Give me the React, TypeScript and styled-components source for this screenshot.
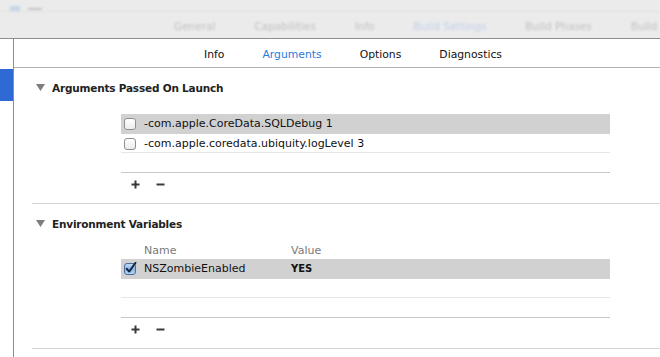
import React from "react";
import styled, { createGlobalStyle } from "styled-components";

const GlobalStyle = createGlobalStyle`
  html, body { margin: 0; padding: 0; background: #ffffff; }
  body { font-family: "DejaVu Sans", "Noto Sans", sans-serif; font-size: 11px; color: #000; }
  * { box-sizing: border-box; }
`;

const Window = styled.div`
  width: 660px;
  height: 357px;
  overflow: hidden;
  display: flex;
  flex-direction: column;
  background: #fff;
`;

const TopBar = styled.div`
  height: 39px;
  flex: none;
  background: #ebebeb;
  border-bottom: 1px solid #8e8e8e;
  display: flex;
  flex-direction: column;
`;

const TitleStrip = styled.div`
  height: 12px;
  border-bottom: 1px solid #e2e2e2;
  display: flex;
  align-items: flex-end;
  gap: 8px;
  padding-left: 10px;
  filter: blur(0.8px);
  overflow: hidden;
`;

const TitleIcon = styled.div`
  width: 10px;
  height: 5px;
  background: #c9d6ea;
`;

const TitleText = styled.div`
  width: 14px;
  height: 2px;
  background: #c4c4c4;
  margin-bottom: 1px;
`;

const ProjectTabs = styled.div`
  flex: 1;
  display: flex;
  align-items: center;
  padding-left: 174px;
  padding-top: 2px;
  gap: 39px;
  filter: blur(0.9px);
  white-space: nowrap;
  overflow: hidden;
`;

const ProjectTab = styled.span<{ $active?: boolean }>`
  font-size: 10.5px;
  color: ${(p) => (p.$active ? "#c3d0ea" : "#c2c2c2")};
`;

const Body = styled.div`
  flex: 1;
  display: flex;
  min-height: 0;
`;

const Sidebar = styled.div`
  width: 14px;
  flex: none;
  border-right: 1px solid #8e8e8e;
  padding-top: 30px;
`;

const SidebarMarker = styled.div`
  width: 13px;
  height: 32px;
  background: #2f69d3;
`;

const Main = styled.div`
  flex: 1;
  display: flex;
  flex-direction: column;
`;

const TabBar = styled.div`
  height: 29px;
  flex: none;
  border-bottom: 1px solid #b2b2b2;
  display: flex;
  align-items: center;
  padding-left: 190px;
  padding-top: 3px;
  gap: 38px;
`;

const Tab = styled.span<{ $active?: boolean }>`
  font-size: 10.8px;
  color: ${(p) => (p.$active ? "#2b7ae0" : "#111")};
`;

const Section = styled.section`
  margin-left: 18px;
  border-bottom: 1px solid #d4d4d4;
  padding-bottom: 7px;
`;

const SectionHeader = styled.div`
  height: 38px;
  display: flex;
  align-items: center;
  gap: 7px;
  padding-left: 4px;
  padding-top: 1px;
  font-weight: bold;
  font-size: 10.5px;
  letter-spacing: -0.2px;
  color: #222;
`;

const Table = styled.div<{ $top: number }>`
  margin-left: 89px;
  width: 489px;
  margin-top: ${(p) => p.$top}px;
`;

const ColumnHeader = styled.div`
  height: 17px;
  display: grid;
  grid-template-columns: 170px 1fr;
  align-items: center;
  padding-left: 23px;
  color: #7a7a7a;
  font-size: 11px;
`;

const HeaderCell = styled.span<{ $first?: boolean }>`
  margin-left: ${(p) => (p.$first ? "0" : "-23px")};
`;

const Row = styled.div<{ $selected?: boolean; $last?: boolean }>`
  height: ${(p) => (p.$selected || p.$last ? 20 : 19)}px;
  display: grid;
  grid-template-columns: 23px 147px 1fr;
  align-items: center;
  background: ${(p) => (p.$selected ? "#d1d1d1" : "#fff")};
  border-bottom: 1px solid ${(p) => (p.$last ? "#c8c8c8" : p.$selected ? "#d1d1d1" : "#e6e6e6")};
  font-size: 11px;
  color: #111;
  white-space: nowrap;
`;

const CheckCell = styled.div`
  display: flex;
  align-items: center;
  padding-left: 3px;
`;

const Toolbar = styled.div`
  height: 23px;
  margin-left: 89px;
  display: flex;
  align-items: center;
  gap: 16px;
  padding-left: 10px;
`;

const ValueCell = styled.span<{ $bold?: boolean }>`
  font-weight: ${(p) => (p.$bold ? "bold" : "normal")};
  font-size: ${(p) => (p.$bold ? "10px" : "11px")};
`;

const Disclosure = () => (
  <svg width="9" height="7" viewBox="0 0 9 7">
    <path d="M0 0 H9 L4.5 7 Z" fill="#7d7d7d" />
  </svg>
);

const Checkbox = ({ checked }: { checked?: boolean }) =>
  checked ? (
    <svg width="13" height="13" viewBox="0 0 13 13">
      <defs>
        <linearGradient id="cbBlue" x1="0" y1="0" x2="0" y2="1">
          <stop offset="0" stopColor="#c9def5" />
          <stop offset="0.5" stopColor="#8ab6e6" />
          <stop offset="1" stopColor="#b9d6f4" />
        </linearGradient>
      </defs>
      <rect x="0.5" y="1.5" width="11" height="11" rx="2.5" fill="url(#cbBlue)" stroke="#4a6f9e" />
      <path d="M2.8 6.8 L5.2 9.6 L11.5 0.8" fill="none" stroke="#10233d" strokeWidth="1.9" strokeLinecap="round" strokeLinejoin="round" />
    </svg>
  ) : (
    <svg width="13" height="13" viewBox="0 0 13 13">
      <defs>
        <linearGradient id="cbWhite" x1="0" y1="0" x2="0" y2="1">
          <stop offset="0" stopColor="#ffffff" />
          <stop offset="1" stopColor="#ececec" />
        </linearGradient>
      </defs>
      <rect x="0.5" y="1.5" width="11" height="11" rx="2.5" fill="url(#cbWhite)" stroke="#8f8f8f" />
    </svg>
  );

const PlusIcon = () => (
  <svg width="9" height="9" viewBox="0 0 9 9">
    <path d="M4.5 0.5 V8.5 M0.5 4.5 H8.5" stroke="#3a3a3a" strokeWidth="2" />
  </svg>
);

const MinusIcon = () => (
  <svg width="9" height="9" viewBox="0 0 9 9">
    <path d="M0.5 4.5 H8.5" stroke="#3a3a3a" strokeWidth="2" />
  </svg>
);

export default function App() {
  return (
    <>
      <GlobalStyle />
      <Window>
        <TopBar>
          <TitleStrip>
            <TitleIcon />
            <TitleText />
          </TitleStrip>
          <ProjectTabs>
            <ProjectTab>General</ProjectTab>
            <ProjectTab>Capabilities</ProjectTab>
            <ProjectTab>Info</ProjectTab>
            <ProjectTab $active>Build Settings</ProjectTab>
            <ProjectTab>Build Phases</ProjectTab>
            <ProjectTab>Build Rules</ProjectTab>
          </ProjectTabs>
        </TopBar>
        <Body>
          <Sidebar>
            <SidebarMarker />
          </Sidebar>
          <Main>
            <TabBar>
              <Tab>Info</Tab>
              <Tab $active>Arguments</Tab>
              <Tab>Options</Tab>
              <Tab>Diagnostics</Tab>
            </TabBar>
            <Section>
              <SectionHeader>
                <Disclosure />
                Arguments Passed On Launch
              </SectionHeader>
              <Table $top={8}>
                <Row $selected>
                  <CheckCell><Checkbox /></CheckCell>
                  <span>-com.apple.CoreData.SQLDebug 1</span>
                  <span />
                </Row>
                <Row>
                  <CheckCell><Checkbox /></CheckCell>
                  <span>-com.apple.coredata.ubiquity.logLevel 3</span>
                  <span />
                </Row>
                <Row $last>
                  <span />
                  <span />
                  <span />
                </Row>
              </Table>
              <Toolbar>
                <PlusIcon />
                <MinusIcon />
              </Toolbar>
            </Section>
            <Section>
              <SectionHeader>
                <Disclosure />
                Environment Variables
              </SectionHeader>
              <Table $top={0}>
                <ColumnHeader>
                  <HeaderCell $first>Name</HeaderCell>
                  <HeaderCell>Value</HeaderCell>
                </ColumnHeader>
                <Row $selected>
                  <CheckCell><Checkbox checked /></CheckCell>
                  <span>NSZombieEnabled</span>
                  <ValueCell $bold>YES</ValueCell>
                </Row>
                <Row>
                  <span />
                  <span />
                  <span />
                </Row>
                <Row $last>
                  <span />
                  <span />
                  <span />
                </Row>
              </Table>
              <Toolbar>
                <PlusIcon />
                <MinusIcon />
              </Toolbar>
            </Section>
          </Main>
        </Body>
      </Window>
    </>
  );
}
